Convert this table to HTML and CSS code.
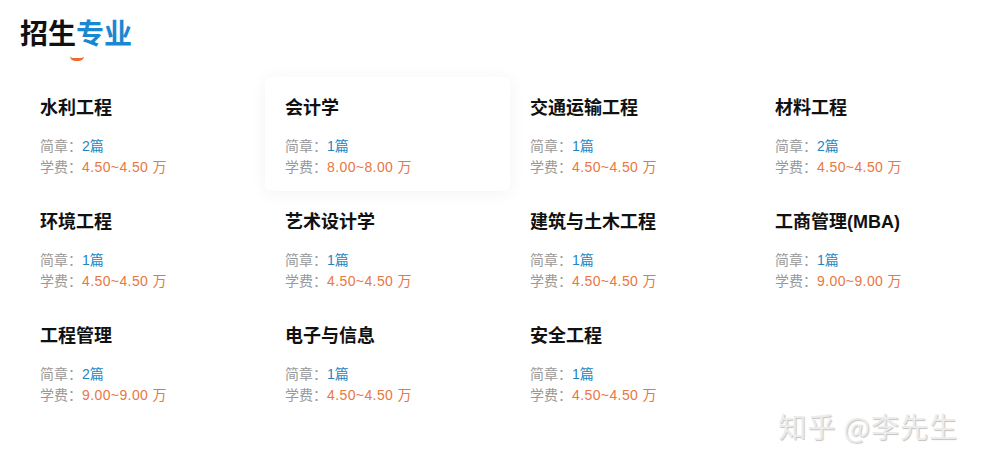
FILE: index.html
```html
<!DOCTYPE html>
<html lang="zh-CN">
<head>
  <meta charset="UTF-8" />
  <title>招生专业</title>
  <link rel="stylesheet" href="styles.css">
</head>
<body>
  <div class="section">
    <h2 class="section-title">招生<span class="blue">专业</span></h2>
    <div class="title-mark"></div>

    <div class="majors">
      <div class="major">
        <div class="major-name">水利工程</div>
        <div class="info">简章：<span class="count">2篇</span></div>
        <div class="info">学费：<span class="fee">4.50~4.50 万</span></div>
      </div>
      <div class="major active">
        <div class="major-name">会计学</div>
        <div class="info">简章：<span class="count">1篇</span></div>
        <div class="info">学费：<span class="fee">8.00~8.00 万</span></div>
      </div>
      <div class="major">
        <div class="major-name">交通运输工程</div>
        <div class="info">简章：<span class="count">1篇</span></div>
        <div class="info">学费：<span class="fee">4.50~4.50 万</span></div>
      </div>
      <div class="major">
        <div class="major-name">材料工程</div>
        <div class="info">简章：<span class="count">2篇</span></div>
        <div class="info">学费：<span class="fee">4.50~4.50 万</span></div>
      </div>

      <div class="major">
        <div class="major-name">环境工程</div>
        <div class="info">简章：<span class="count">1篇</span></div>
        <div class="info">学费：<span class="fee">4.50~4.50 万</span></div>
      </div>
      <div class="major">
        <div class="major-name">艺术设计学</div>
        <div class="info">简章：<span class="count">1篇</span></div>
        <div class="info">学费：<span class="fee">4.50~4.50 万</span></div>
      </div>
      <div class="major">
        <div class="major-name">建筑与土木工程</div>
        <div class="info">简章：<span class="count">1篇</span></div>
        <div class="info">学费：<span class="fee">4.50~4.50 万</span></div>
      </div>
      <div class="major">
        <div class="major-name">工商管理(MBA)</div>
        <div class="info">简章：<span class="count">1篇</span></div>
        <div class="info">学费：<span class="fee">9.00~9.00 万</span></div>
      </div>

      <div class="major">
        <div class="major-name">工程管理</div>
        <div class="info">简章：<span class="count">2篇</span></div>
        <div class="info">学费：<span class="fee">9.00~9.00 万</span></div>
      </div>
      <div class="major">
        <div class="major-name">电子与信息</div>
        <div class="info">简章：<span class="count">1篇</span></div>
        <div class="info">学费：<span class="fee">4.50~4.50 万</span></div>
      </div>
      <div class="major">
        <div class="major-name">安全工程</div>
        <div class="info">简章：<span class="count">1篇</span></div>
        <div class="info">学费：<span class="fee">4.50~4.50 万</span></div>
      </div>
    </div>
  </div>

  <div class="watermark">知乎 @李先生</div>
</body>
</html>
```

FILE: styles.css
```css
body {
  margin: 0;
  background: #fff;
  font-family: "Noto Sans CJK SC", "Noto Sans", sans-serif;
  color: #333;
  height: 469px;
  overflow: hidden;
  position: relative;
}

.section {
  padding: 13px 20px 0;
}

.section-title {
  margin: 0;
  font-size: 28px;
  line-height: 38px;
  font-weight: 700;
  color: #111;
}

.section-title .blue {
  color: #1a87d3;
}

.title-mark {
  width: 14px;
  height: 5px;
  margin: 5px 0 0 50px;
  border-bottom: 3px solid #ee6a2e;
  border-radius: 0 0 8px 8px;
  box-sizing: border-box;
}

.majors {
  display: grid;
  grid-template-columns: repeat(4, 245px);
  grid-auto-rows: 114px;
  margin-top: 16px;
}

.major {
  padding: 18px 20px 0;
  border-radius: 6px;
}

.major.active {
  box-shadow: 0 2px 16px rgba(30, 50, 120, 0.06);
}

.major-name {
  font-family: "Liberation Sans", "Noto Sans CJK SC", sans-serif;
  font-size: 18px;
  font-weight: 700;
  color: #111;
  line-height: 26px;
  margin-bottom: 15px;
}

.info {
  font-family: "Liberation Sans", "Noto Sans CJK SC", sans-serif;
  font-size: 14px;
  line-height: 21px;
  color: #999;
}

.count {
  color: #1f86bd;
}

.fee {
  color: #e9773f;
  letter-spacing: 0.4px;
}

.watermark {
  position: absolute;
  right: 26px;
  bottom: 23px;
  font-size: 28px;
  color: #ececec;
  letter-spacing: 1px;
  text-shadow: 1px 1px 1px #c4c4c4;
}
```
